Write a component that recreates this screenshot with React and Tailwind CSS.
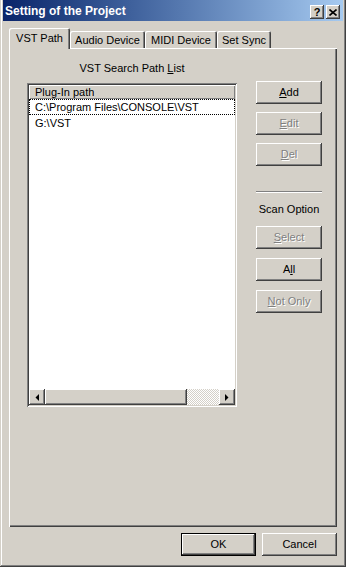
const face = 'bg-[#d4d0c8]';
const raised = 'shadow-[inset_-1px_-1px_#404040,inset_1px_1px_#ffffff,inset_-2px_-2px_#808080,inset_2px_2px_#d4d0c8]';
const sunken = 'shadow-[inset_1px_1px_#808080,inset_-1px_-1px_#ffffff,inset_2px_2px_#404040,inset_-2px_-2px_#d4d0c8]';
const disabledText = 'text-[#808080] [text-shadow:1px_1px_0_#ffffff]';

function Btn({ children, disabled, w = 'w-[66px]', isDefault }) {
    if (isDefault) {
        return (
            <div className={`${w} h-[23px] border border-black ${face}`}>
                <div className={`w-full h-full flex items-center justify-center ${raised}`}>{children}</div>
            </div>
        );
    }
    return (
        <div className={`${w} h-[23px] flex items-center justify-center ${face} ${raised} ${disabled ? disabledText : 'text-black'}`}>
            {children}
        </div>
    );
}

function Tab({ label, active, w }) {
    return (
        <div
            className={`${w} ${face} flex items-center justify-center rounded-t-[2px] ${active
                ? 'h-[21px] relative z-10 shadow-[inset_1px_1px_#ffffff,inset_-1px_0_#404040,inset_-2px_0_#808080] pb-[1px]'
                : 'h-[18px] shadow-[inset_1px_1px_#ffffff,inset_-1px_0_#404040,inset_-2px_0_#808080]'}`}
        >
            {label}
        </div>
    );
}

function Arrow({ dir }) {
    return (
        <div className={`w-[16px] h-[16px] shrink-0 flex items-center justify-center ${face} ${raised}`}>
            <svg width="4" height="7" viewBox="0 0 4 7">
                {dir === 'left'
                    ? <polygon points="4,0 4,7 0.5,3.5" fill="#000" />
                    : <polygon points="0,0 0,7 3.5,3.5" fill="#000" />}
            </svg>
        </div>
    );
}

export default function App() {
    return (
        <div
            className={`w-[346px] h-[567px] ${face} flex flex-col px-[3px] pb-[3px] text-[11px] leading-none text-black shadow-[inset_-1px_-1px_#404040,inset_1px_0_#d4d0c8,inset_-2px_-2px_#808080,inset_2px_0_#ffffff]`}
            style={{ fontFamily: '"Liberation Sans", Arial, sans-serif' }}
        >
            {/* Title bar */}
            <div className="h-[21px] flex items-center justify-between bg-gradient-to-r from-[#0a246a] to-[#a6caf0] pl-[2px] pr-[3px]">
                <span className="text-white font-bold text-[12px]">Setting of the Project</span>
                <div className="flex gap-[2px] mt-[3px]">
                    <div className={`w-[14px] h-[14px] ${face} ${raised} flex items-center justify-center font-bold text-[11px]`}>?</div>
                    <div className={`w-[14px] h-[14px] ${face} ${raised} flex items-center justify-center`}>
                        <svg width="8" height="7" viewBox="0 0 8 7">
                            <path d="M0.5 0.5 L7.5 6.5 M7.5 0.5 L0.5 6.5" stroke="#000" strokeWidth="1.6" />
                        </svg>
                    </div>
                </div>
            </div>

            {/* Body */}
            <div className="flex-1 flex flex-col px-[6px] pt-[8px] pb-[6px]">
                {/* Tabs */}
                <div className="flex items-end h-[20px] -mb-[1px]">
                    <Tab label="VST Path" active w="w-[61px]" />
                    <Tab label="Audio Device" w="w-[75px]" />
                    <Tab label="MIDI Device" w="w-[72px]" />
                    <Tab label="Set Sync" w="w-[54px]" />
                </div>

                {/* Panel */}
                <div className={`h-[479px] ${face} shadow-[inset_1px_1px_#ffffff,inset_-1px_-1px_#404040,inset_-2px_-2px_#808080] flex`}>
                    <div className="ml-[18px] mt-[13px] flex flex-col">
                        <div className="h-[14px] flex items-center justify-center">
                            <span>VST Search Path <u className="underline-offset-1">L</u>ist</span>
                        </div>
                        <div className={`mt-[8px] w-[210px] h-[324px] bg-white p-[2px] flex flex-col ${sunken}`}>
                            <div className={`h-[14px] ${face} shadow-[inset_1px_1px_#ffffff,inset_-1px_-1px_#808080] flex items-center pl-[6px]`}>
                                Plug-In path
                            </div>
                            <div className="h-[16px] border border-dotted border-black flex items-center pl-[5px]">
                                C:\Program Files\CONSOLE\VST
                            </div>
                            <div className="h-[16px] flex items-center pl-[6px]">G:\VST</div>
                            <div className="flex-1" />
                            <div className="h-[16px] flex">
                                <Arrow dir="left" />
                                <div className={`w-[142px] h-[16px] ${face} ${raised}`} />
                                <div className="flex-1 h-[16px] bg-[repeating-conic-gradient(#ffffff_0_25%,#d4d0c8_0_50%)] bg-[length:2px_2px]" />
                                <Arrow dir="right" />
                            </div>
                        </div>
                    </div>

                    <div className="ml-[19px] mt-[33px] flex flex-col w-[66px]">
                        <Btn><span><u>A</u>dd</span></Btn>
                        <div className="h-[8px]" />
                        <Btn disabled><span><u>E</u>dit</span></Btn>
                        <div className="h-[8px]" />
                        <Btn disabled><span><u>D</u>el</span></Btn>
                        <div className="mt-[25px] h-[2px] shadow-[inset_0_1px_#808080,inset_0_-1px_#ffffff]" />
                        <div className="mt-[9px] h-[14px] flex items-center justify-center">Scan Option</div>
                        <div className="h-[10px]" />
                        <Btn disabled><span><u>S</u>elect</span></Btn>
                        <div className="h-[9px]" />
                        <Btn><span>A<u>l</u>l</span></Btn>
                        <div className="h-[9px]" />
                        <Btn disabled><span><u>N</u>ot Only</span></Btn>
                    </div>
                </div>

                {/* Dialog buttons */}
                <div className="mt-[6px] flex justify-end gap-[6px]">
                    <Btn w="w-[75px]" isDefault>OK</Btn>
                    <Btn w="w-[75px]">Cancel</Btn>
                </div>
            </div>
        </div>
    );
}
